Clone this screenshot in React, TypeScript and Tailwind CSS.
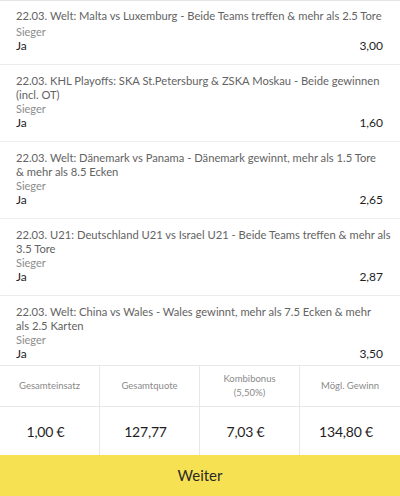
import React from "react";

type Bet = { lines: string[]; odds: string };

const bets: Bet[] = [
  { lines: ["22.03. Welt: Malta vs Luxemburg - Beide Teams treffen & mehr als 2.5 Tore"], odds: "3,00" },
  { lines: ["22.03. KHL Playoffs: SKA St.Petersburg & ZSKA Moskau - Beide gewinnen", "(incl. OT)"], odds: "1,60" },
  { lines: ["22.03. Welt: Dänemark vs Panama - Dänemark gewinnt, mehr als 1.5 Tore", "& mehr als 8.5 Ecken"], odds: "2,65" },
  { lines: ["22.03. U21: Deutschland U21 vs Israel U21 - Beide Teams treffen & mehr als", "3.5 Tore"], odds: "2,87" },
  { lines: ["22.03. Welt: China vs Wales - Wales gewinnt, mehr als 7.5 Ecken & mehr", "als 2.5 Karten"], odds: "3,50" },
];

const summary = [
  { label: ["Gesamteinsatz"], value: "1,00 €" },
  { label: ["Gesamtquote"], value: "127,77" },
  { label: ["Kombibonus", "(5,50%)"], value: "7,03 €" },
  { label: ["Mögl. Gewinn"], value: "134,80 €" },
];

export default function App() {
  return (
    <div
      className="w-[400px] h-[496px] bg-white flex flex-col overflow-hidden"
      style={{ fontFamily: "Lato, 'Open Sans', sans-serif" }}
    >
      <div className="flex-1 min-h-0 overflow-hidden flex flex-col border-t border-[#e6e6e6]">
        {bets.map((b, i) => (
          <div
            key={i}
            className={
              i === 0
                ? "shrink-0 pl-4 pr-[17px] pt-[8px] pb-[10px] border-b border-[#ececec]"
                : "shrink-0 pl-4 pr-[17px] pt-[9px] pb-[10px] border-b border-[#ececec]"
            }
          >
            <div className="text-[11.2px] leading-[14px] text-[#636363] whitespace-nowrap">
              {b.lines.map((l, j) => (
                <div key={j}>{l}</div>
              ))}
            </div>
            <div
              className={
                i === 0
                  ? "mt-[2px] text-[11px] leading-[13px] text-[#8c8c8c]"
                  : "text-[11px] leading-[13px] text-[#8c8c8c]"
              }
            >
              Sieger
            </div>
            <div className="flex justify-between text-[12px] leading-[16px] text-[#1e1e1e]">
              <span>Ja</span>
              <span>{b.odds}</span>
            </div>
          </div>
        ))}
      </div>
      <div className="shrink-0 grid grid-cols-4 border-t border-[#e8e8e8] bg-white">
        {summary.map((s, i) => (
          <div key={i} className={i < 3 ? "border-r border-[#e8e8e8]" : ""}>
            <div className="h-[41px] flex flex-col items-center justify-center text-[9.5px] leading-[14px] text-[#8a8a8a] border-b border-[#e8e8e8]">
              {s.label.map((l, j) => (
                <span key={j}>{l}</span>
              ))}
            </div>
            <div className="h-[48px] pr-[8px] flex items-center justify-center text-[14px] tracking-[-0.2px] text-[#1e1e1e]">
              {s.value}
            </div>
          </div>
        ))}
      </div>
      <div className="shrink-0 h-[41px] bg-[#f6e153] flex items-center justify-center text-[15px] text-[#2a2a2a]">
        Weiter
      </div>
    </div>
  );
}
